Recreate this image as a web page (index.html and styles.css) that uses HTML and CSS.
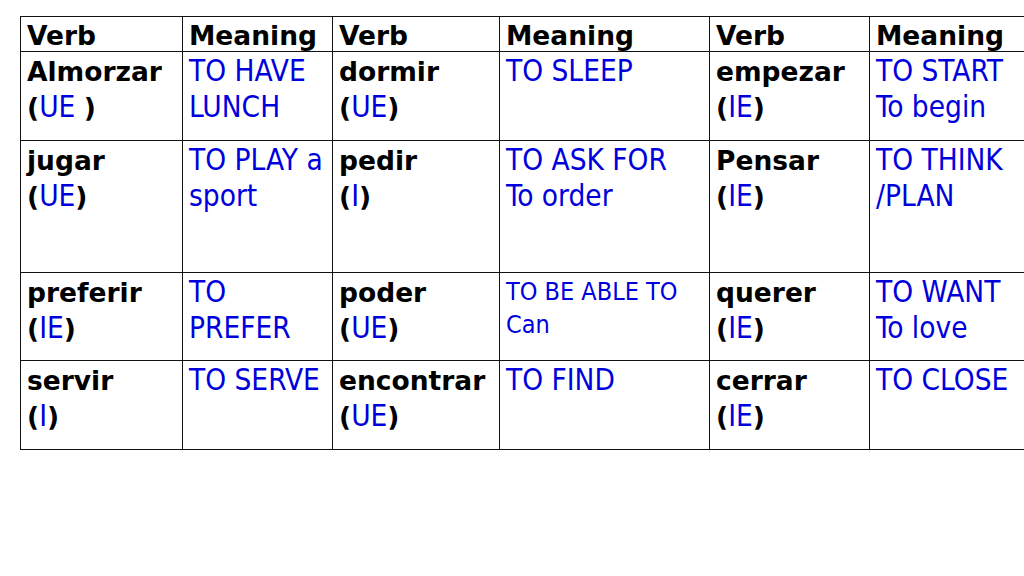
FILE: index.html
```html
<!DOCTYPE html>
<html>
<head>
<meta charset="utf-8">
<link rel="stylesheet" href="styles.css">
</head>
<body>
<table class="verbs">
  <colgroup>
    <col class="c1"><col class="c2"><col class="c3"><col class="c4"><col class="c5"><col class="c6">
  </colgroup>
  <thead>
    <tr class="head">
      <th>Verb</th><th>Meaning</th><th>Verb</th><th>Meaning</th><th>Verb</th><th>Meaning</th>
    </tr>
  </thead>
  <tbody>
    <tr class="r1">
      <td class="v">Almorzar<br>(<span class="st">UE </span>)</td>
      <td class="m">TO HAVE<br>LUNCH</td>
      <td class="v">dormir<br>(<span class="st">UE</span>)</td>
      <td class="m">TO SLEEP</td>
      <td class="v">empezar<br>(<span class="st">IE</span>)</td>
      <td class="m">TO START<br>To begin</td>
    </tr>
    <tr class="r2">
      <td class="v">jugar<br>(<span class="st">UE</span>)</td>
      <td class="m">TO PLAY a<br>sport</td>
      <td class="v">pedir<br>(<span class="st">I</span>)</td>
      <td class="m">TO ASK FOR<br>To order</td>
      <td class="v">Pensar<br>(<span class="st">IE</span>)</td>
      <td class="m">TO THINK<br>/PLAN</td>
    </tr>
    <tr class="r3">
      <td class="v">preferir<br>(<span class="st">IE</span>)</td>
      <td class="m">TO<br>PREFER</td>
      <td class="v">poder<br>(<span class="st">UE</span>)</td>
      <td class="m sm">TO BE ABLE TO<br>Can</td>
      <td class="v">querer<br>(<span class="st">IE</span>)</td>
      <td class="m">TO WANT<br>To love</td>
    </tr>
    <tr class="r4">
      <td class="v">servir<br>(<span class="st">I</span>)</td>
      <td class="m">TO SERVE</td>
      <td class="v">encontrar<br>(<span class="st">UE</span>)</td>
      <td class="m">TO FIND</td>
      <td class="v">cerrar<br>(<span class="st">IE</span>)</td>
      <td class="m">TO CLOSE</td>
    </tr>
  </tbody>
</table>
</body>
</html>
```

FILE: styles.css
```css
html, body {
  margin: 0;
  background: #ffffff;
  overflow: hidden;
  width: 1024px;
  height: 576px;
}
body {
  padding: 16px 0 0 20px;
  box-sizing: border-box;
}
.verbs {
  border-collapse: collapse;
  table-layout: fixed;
  width: 1014px;
  font-family: "DejaVu Sans", Verdana, sans-serif;
}
.c1 { width: 162px; }
.c2 { width: 150px; }
.c3 { width: 167px; }
.c4 { width: 210px; }
.c5 { width: 160px; }
.c6 { width: 165px; }

.verbs th, .verbs td {
  border: 1px solid #111111;
  text-align: left;
  vertical-align: top;
  padding: 2px 0 0 6px;
  white-space: nowrap;
  overflow: hidden;
}
.verbs th {
  font-weight: bold;
  font-size: 26.5px;
  line-height: 31px;
  color: #000;
  height: 31px;
  padding-top: 3px;
}
.v {
  font-weight: bold;
  font-size: 26.5px;
  line-height: 35.5px;
  color: #000;
}
.st {
  font-family: "DejaVu Sans Condensed", "DejaVu Sans", sans-serif;
  font-weight: normal;
  font-size: 29.5px;
  color: #0000dd;
}
.m {
  font-family: "DejaVu Sans Condensed", "DejaVu Sans", sans-serif;
  font-weight: normal;
  font-size: 29.5px;
  line-height: 35.5px;
  color: #0000dd;
}
.m.sm {
  font-size: 25px;
  line-height: 33px;
}
.r1 td { height: 86px; }
.r2 td { height: 129px; }
.r3 td { height: 85px; }
.r4 td { height: 86px; }
```
